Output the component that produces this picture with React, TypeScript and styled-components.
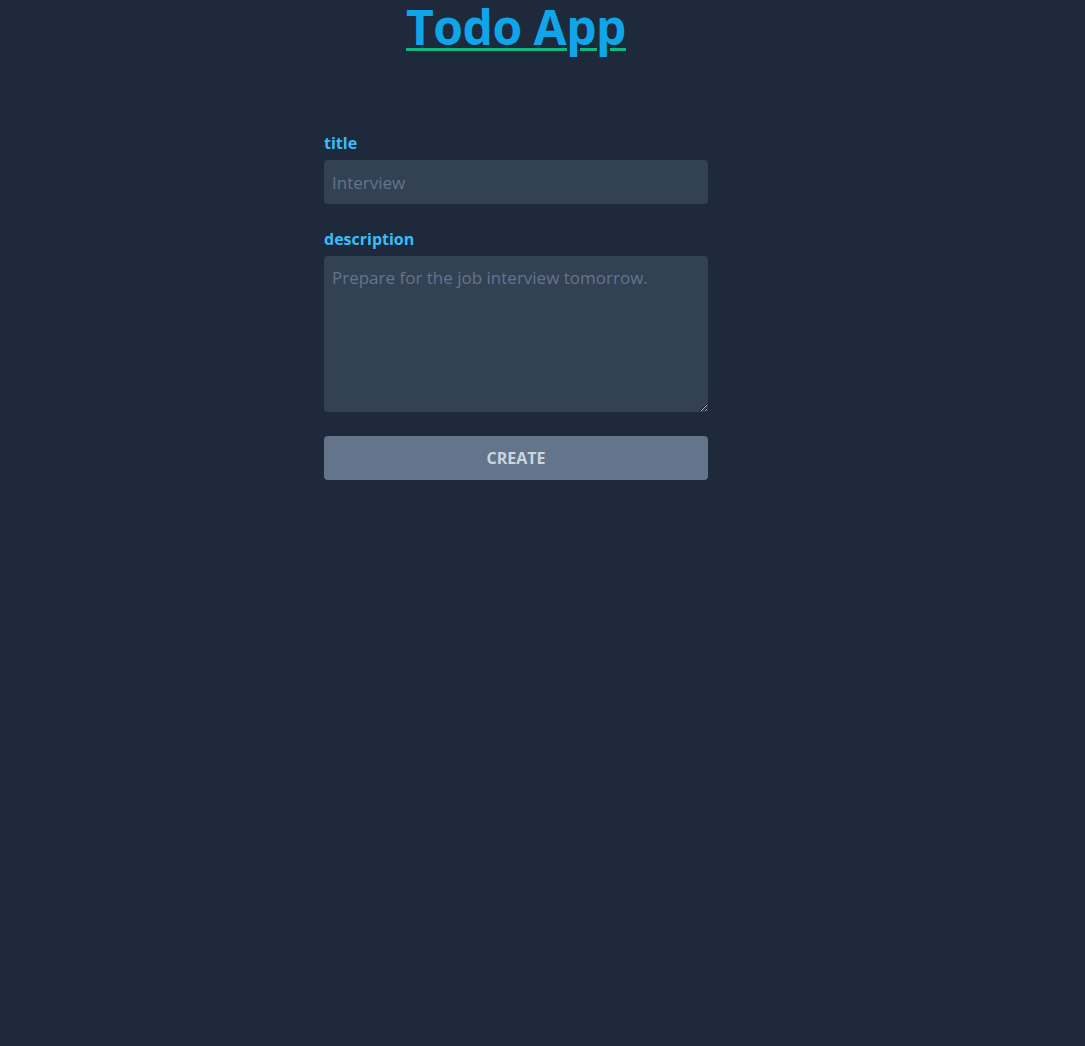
import React from "react";
import styled, { createGlobalStyle } from "styled-components";

const GlobalStyle = createGlobalStyle`
  html, body { margin: 0; padding: 0; background: #1e293b; }
  body { font-family: "Open Sans", "Noto Sans", sans-serif; min-height: 1046px; }
  * { box-sizing: border-box; }
`;

const Page = styled.main`
  width: 1032px;
  display: flex;
  flex-direction: column;
  align-items: center;
`;

const Heading = styled.h1`
  margin: 0;
  font-family: "Open Sans", "Noto Sans", sans-serif;
  font-size: 48px;
  line-height: 54px;
  font-weight: 700;
  color: #0ea5e9;
  text-decoration: underline;
  text-decoration-color: #10b981;
  text-decoration-thickness: 3px;
  text-underline-offset: 3px;
  letter-spacing: -0.5px;
`;

const Form = styled.form`
  width: 384px;
  margin-top: 78px;
  display: flex;
  flex-direction: column;
`;

const Field = styled.div`
  display: flex;
  flex-direction: column;
  gap: 4px;
  margin-bottom: 24px;
`;

const Label = styled.label`
  color: #38bdf8;
  font-size: 16px;
  line-height: 24px;
  font-weight: 700;
  margin-top: -1px;
  margin-bottom: 1px;
`;

const fieldBase = `
  width: 100%;
  background: #334155;
  border: none;
  border-radius: 4px;
  padding: 8px;
  font-family: "Open Sans", "Noto Sans", sans-serif;
  font-size: 17px;
  line-height: 28px;
  color: #e2e8f0;
  outline: none;
  &::placeholder { color: #64748b; }
`;

const Input = styled.input`
  ${fieldBase}
  height: 44px;
`;

const TextArea = styled.textarea`
  ${fieldBase}
  height: 156px;
  display: block;
  resize: vertical;
`;

const Button = styled.button`
  height: 44px;
  width: 100%;
  border: none;
  border-radius: 4px;
  background: #64748b;
  color: #cbd5e1;
  font-family: "Open Sans", "Noto Sans", sans-serif;
  font-size: 16px;
  font-weight: 700;
  cursor: pointer;
`;

export default function App() {
  return (
    <>
      <GlobalStyle />
      <Page>
        <Heading>Todo App</Heading>
        <Form onSubmit={(e) => e.preventDefault()}>
          <Field>
            <Label htmlFor="title">title</Label>
            <Input id="title" placeholder="Interview" />
          </Field>
          <Field>
            <Label htmlFor="description">description</Label>
            <TextArea id="description" placeholder="Prepare for the job interview tomorrow." />
          </Field>
          <Button type="submit">CREATE</Button>
        </Form>
      </Page>
    </>
  );
}
